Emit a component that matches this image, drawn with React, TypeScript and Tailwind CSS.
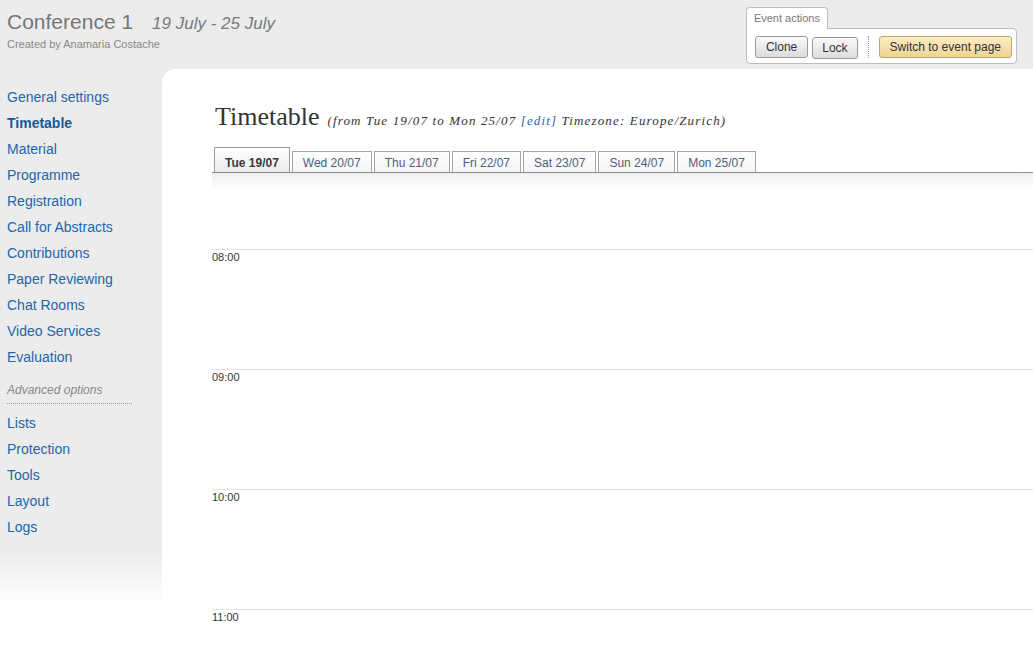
import type { ReactNode } from "react";

const sans = "font-['Liberation_Sans',Arial,sans-serif]";
const serif = "font-['Liberation_Serif','Times_New_Roman',serif]";

const mainMenu = [
  "General settings",
  "Timetable",
  "Material",
  "Programme",
  "Registration",
  "Call for Abstracts",
  "Contributions",
  "Paper Reviewing",
  "Chat Rooms",
  "Video Services",
  "Evaluation",
];
const advancedMenu = ["Lists", "Protection", "Tools", "Layout", "Logs"];
const days = ["Tue 19/07", "Wed 20/07", "Thu 21/07", "Fri 22/07", "Sat 23/07", "Sun 24/07", "Mon 25/07"];
const hours = ["08:00", "09:00", "10:00", "11:00"];

function ActionButton({ children, primary = false, pad = "px-[10px]" }: { children: ReactNode; primary?: boolean; pad?: string }) {
  const look = primary
    ? "border-[#b8a878] bg-linear-to-b from-[#fcedc4] to-[#efd594]"
    : "border-[#9a9a9a] bg-linear-to-b from-[#fafafa] to-[#dcdcdc]";
  return (
    <button className={`h-[22px] rounded-[3px] border ${pad} text-[12px] leading-[20px] text-[#333] ${look}`}>
      {children}
    </button>
  );
}

function MenuItem({ label, active = false }: { label: string; active?: boolean }) {
  return (
    <div
      className={`h-[26px] pl-[7px] text-[14px] leading-[26px] ${
        active ? "font-bold text-[#15599a]" : "text-[#2266ab]"
      }`}
    >
      {label}
    </div>
  );
}

export default function App() {
  return (
    <div className={`${sans} h-[651px] overflow-hidden bg-white`}>
      {/* header */}
      <div className="flex h-[69px] items-start justify-between bg-[#ececec]">
        <div className="pl-[7px] pt-[9px]">
          <div className="flex items-baseline">
            <span className="text-[21px] leading-[26px] text-[#767676]">Conference 1</span>
            <span className="ml-[19px] text-[17px] italic text-[#7a7a7a]">19 July - 25 July</span>
          </div>
          <div className="text-[11px] leading-[14px] text-[#888]">Created by Anamaria Costache</div>
        </div>
        <div className="mr-[16px] mt-[7px] flex flex-col items-start">
          <div className="relative z-10 -mb-px rounded-t-[4px] border border-b-0 border-[#bdbdbd] bg-white px-[7px] text-[11px] leading-[21px] text-[#777]">
            Event actions
          </div>
          <div className="flex items-center rounded-[4px] rounded-tl-none border border-[#bdbdbd] bg-white pb-[4px] pl-[8px] pr-[4px] pt-[6px]">
            <ActionButton>Clone</ActionButton>
            <div className="ml-[4px]">
              <ActionButton pad="px-[9px]">Lock</ActionButton>
            </div>
            <div className="mx-[10px] h-[22px] border-l border-dotted border-[#999]" />
            <ActionButton primary>Switch to event page</ActionButton>
          </div>
        </div>
      </div>

      {/* body */}
      <div className="flex items-start">
        <div className="w-[162px] shrink-0 bg-linear-to-b from-[#ececec] from-90% to-white pb-[65px] pt-[15px]">
          {mainMenu.map((m) => (
            <MenuItem key={m} label={m} active={m === "Timetable"} />
          ))}
          <div className="mb-[6px] ml-[7px] mr-[30px] border-b border-dotted border-[#999] pb-[5px] pt-[12px] text-[12px] italic leading-[16px] text-[#888]">
            Advanced options
          </div>
          {advancedMenu.map((m) => (
            <MenuItem key={m} label={m} />
          ))}
        </div>

        <div className="min-w-0 flex-1 bg-[#ececec]">
          <div className="rounded-tl-[14px] bg-white pl-[50px] pt-[33px]">
            <div className={`${serif} ml-[3px] flex items-baseline text-[#333]`}>
              <span className="text-[26px] leading-[30px]">Timetable</span>
              <span className="ml-[8px] text-[13px] italic tracking-[1.15px]">
                (from Tue 19/07 to Mon 25/07 <span className="text-[#2266ab]">[edit]</span> Timezone: Europe/Zurich)
              </span>
            </div>

            <div className="mt-[15px] flex items-end border-b border-[#8c8c8c] pl-[2px]">
              {days.map((d, i) =>
                i === 0 ? (
                  <div
                    key={d}
                    className="mr-[2px] h-[25px] border border-b-0 border-[#9a9a9a] bg-linear-to-b from-white to-[#ededed] px-[10px] pt-[8px] text-[12px] font-bold leading-[14px] text-[#3a3a3a]"
                  >
                    {d}
                  </div>
                ) : (
                  <div
                    key={d}
                    className="mr-[2px] h-[21px] border border-b-0 border-[#a5a5a5] bg-linear-to-b from-white to-[#f4f4f4] px-[10px] pt-[4px] text-[12px] leading-[14px] text-[#4f5f80]"
                  >
                    {d}
                  </div>
                )
              )}
            </div>
            <div className="h-[76px] bg-linear-to-b from-[#efefef] to-white to-[22%]" />

            {hours.map((h) => (
              <div key={h} className="h-[120px] border-t border-[#e4e4e4] text-[11px] leading-[14px] text-[#333]">
                {h}
              </div>
            ))}
          </div>
        </div>
      </div>
    </div>
  );
}
